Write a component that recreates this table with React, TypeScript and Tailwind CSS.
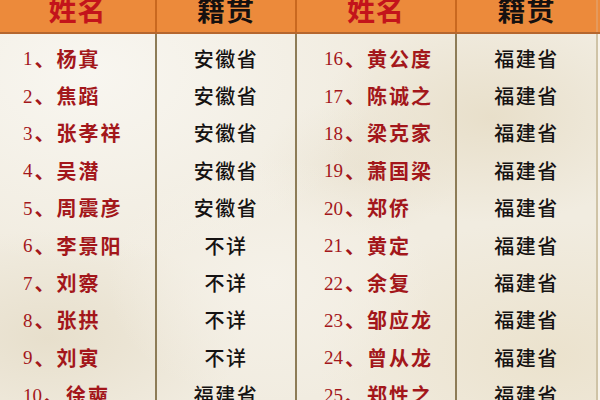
const cjk = "font-['Noto_Sans_CJK_SC',sans-serif]"

const left = [
  ['1', '杨寘', '安徽省'],
  ['2', '焦蹈', '安徽省'],
  ['3', '张孝祥', '安徽省'],
  ['4', '吴潜', '安徽省'],
  ['5', '周震彦', '安徽省'],
  ['6', '李景阳', '不详'],
  ['7', '刘察', '不详'],
  ['8', '张拱', '不详'],
  ['9', '刘寅', '不详'],
  ['10', '徐奭', '福建省'],
]

const right = [
  ['16', '黄公度', '福建省'],
  ['17', '陈诚之', '福建省'],
  ['18', '梁克家', '福建省'],
  ['19', '萧国梁', '福建省'],
  ['20', '郑侨', '福建省'],
  ['21', '黄定', '福建省'],
  ['22', '余复', '福建省'],
  ['23', '邹应龙', '福建省'],
  ['24', '曾从龙', '福建省'],
  ['25', '郑性之', '福建省'],
]

function HeadCell({ text, red, last }: { text: string; red?: boolean; last?: boolean }) {
  return (
    <div
      className={`flex justify-center overflow-hidden border-r-2 ${last ? 'border-[#e59a5c]' : 'border-[#c9681f]'}`}
    >
      <span
        className={`-mt-[5px] text-[28px] leading-none font-bold tracking-[1px] ${cjk} ${red ? 'text-[#c3141b]' : 'text-[#141010]'}`}
      >
        {text}
      </span>
    </div>
  )
}

function NameCol({ rows, pad }: { rows: string[][]; pad: string }) {
  return (
    <div className={`flex flex-col pt-[6px] border-r-2 border-[#8d7c57] ${pad}`}>
      {rows.map(([n, name]) => (
        <div key={n} className="h-[37.4px] flex items-center text-[#a3171b] whitespace-nowrap">
          <span className="font-['Liberation_Serif',serif] text-[19px] leading-none">{n}</span>
          <span className={`${cjk} text-[20px] leading-none font-semibold tracking-[2px] ml-[2px]`}>、{name}</span>
        </div>
      ))}
    </div>
  )
}

function PlaceCol({ rows, last }: { rows: string[][]; last?: boolean }) {
  return (
    <div className={`flex flex-col pt-[6px] border-r-2 ${last ? 'border-[#cfc3a6]' : 'border-[#8d7c57]'}`}>
      {rows.map(([n, , place]) => (
        <div
          key={n}
          className={`h-[37.4px] flex items-center justify-center ${cjk} text-[20px] leading-none font-medium tracking-[1.5px] text-[#151212]`}
        >
          {place}
        </div>
      ))}
    </div>
  )
}

export default function App() {
  return (
    <div className="w-[600px] h-[400px] overflow-hidden flex flex-col bg-[#f1ece0]">
      <div className="grid grid-cols-[157px_140px_160px_141px_2px] h-[34px] shrink-0 bg-[#ec8a3b] border-b-2 border-[#b5672f]">
        <HeadCell text="姓名" red />
        <HeadCell text="籍贯" />
        <HeadCell text="姓名" red />
        <HeadCell text="籍贯" last />
        <div />
      </div>
      <div className="flex-1 grid grid-cols-[157px_140px_160px_141px_2px] bg-[radial-gradient(ellipse_at_15%_10%,#f8f6f0_0,transparent_40%),radial-gradient(ellipse_at_82%_22%,#e8dfca_0,transparent_25%),radial-gradient(ellipse_at_45%_65%,#f5f1e8_0,transparent_35%),radial-gradient(ellipse_at_8%_80%,#e7dfcc_0,transparent_25%),radial-gradient(ellipse_at_92%_85%,#ebe2cd_0,transparent_30%),radial-gradient(ellipse_at_60%_35%,#ebe4d4_0,transparent_20%)]">
        <NameCol rows={left} pad="pl-[23px]" />
        <PlaceCol rows={left} />
        <NameCol rows={right} pad="pl-[27px]" />
        <PlaceCol rows={right} last />
        <div className="bg-[#f7f3ea]" />
      </div>
    </div>
  )
}
